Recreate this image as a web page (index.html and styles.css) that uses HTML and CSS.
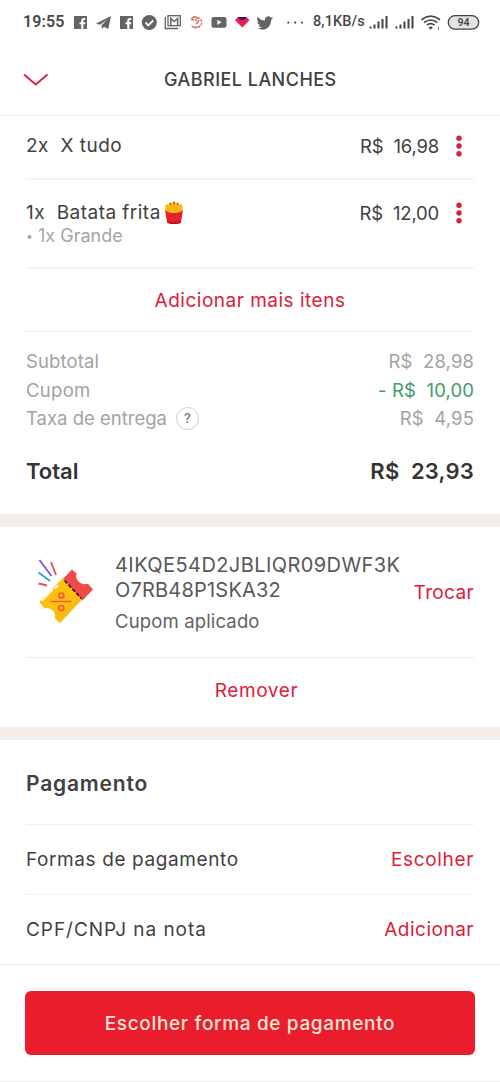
FILE: index.html
```html
<!DOCTYPE html>
<html lang="pt-BR">
<head>
<meta charset="utf-8">
<title>Gabriel Lanches</title>
<link rel="stylesheet" href="styles.css">
</head>
<body>
<div class="screen">
  <div class="status">
    <span class="clock">19:55</span>
    <svg class="status-icons" width="232" height="20" viewBox="72 12 232 20">
      <g fill="#646464">
        <path d="M74 16h13v13h-3.6v-4.800h1.800v-2h-1.800v-1.400q0-1 1-1h1v-1.900h-1.800q-2.400 0-2.400 2.500v1.800h-1.700v2h1.700V29H74z"/>
        <path d="M96 23.500 111 16l-2.700 13-4.300-2.300-1.800 2.300-.8-3.500 5.800-6-7.200 5.200z"/>
        <path d="M120 16h13v13h-3.600v-4.800h1.800v-2h-1.800v-1.400q0-1 1-1h1v-1.900h-1.800q-2.400 0-2.400 2.500v1.800h-1.700v2h1.700V29H120z"/>
        <circle cx="149.300" cy="22.500" r="7.500"/>
        <rect x="211.500" y="17" width="15" height="10.700" rx="2.200"/>
        <path d="M273 16.700q-1 .6-2.100.7a3.600 3.600 0 0 0-6.100 3.200q-4-.2-7.200-3.600-1.500 3 1.200 5-.9 0-1.600-.4.200 2.700 2.900 3.500l-1.500.1q.8 2 3.200 2.400-2.200 1-4 .7 4 2.400 8.200.7 5-2.700 5.200-9 1-.8 1.800-1.900-.9.500-1.900.5 1.200-.6 1.900-1.900z"/>
      </g>
      <path d="m145.500 22.500 2.800 2.800 5-5" fill="none" stroke="#fff" stroke-width="1.900"/>
      <path d="M217.300 19.700v5.200l4.400-2.600z" fill="#fff"/>
      <g fill="none" stroke="#646464">
        <path d="M165.300 17v11.500h13" stroke-width="1.300"/>
        <rect x="168" y="15.700" width="12.300" height="10" stroke-width="1.300"/>
        <path d="M170.800 25v-6.500l3.400 3 3.400-3V25" stroke-width="1.500"/>
      </g>
      <g fill="none" stroke="#d96860" stroke-width="1.400" stroke-dasharray="2.500 1">
        <path d="M191 19q5-4 9 0t-1 8q-5 2-8-2"/>
        <path d="M191.500 20.500q3-2 5 0t-1 4M193 16.500l5 2M194 27.500l5-1M199 20l-2 4"/>
      </g>
      <path d="m235 20.300 3-3.300h8.500l3 3.300-7.200 7.200z" fill="#e91e55"/>
      <path d="m238 17h8.500l-1.500 2.300-2.700 1-2.900-1z" fill="#34145f"/>
      <g fill="#444"><circle cx="288.300" cy="22.600" r="1.050"/><circle cx="295.200" cy="22.600" r="1.050"/><circle cx="302" cy="22.600" r="1.050"/></g>
    </svg>
    <span class="speed">8,1KB/s</span>
    <svg class="signals" width="112" height="20" viewBox="368 12 112 20">
      <g stroke="#444" stroke-width="2">
        <path d="M370.500 28.500v-2M374.500 28.500v-4M378.500 28.500v-7M382.500 28.500v-9.500M386.500 28.500v-12.500"/>
        <path d="M396.500 28.500v-2M400.500 28.500v-4M404.500 28.500v-7M408.500 28.500v-9.500M412.500 28.500v-12.500"/>
      </g>
      <g fill="none" stroke="#444" stroke-width="1.700">
        <path d="M421.500 19.700q9.200-7 18.400 0M424.200 22.500q6.500-5 13 0M426.800 25.200q3.900-3 7.800 0"/>
      </g>
      <path d="m428.500 27.200q2.200-1.400 4.400 0l-2.200 2.500z" fill="#444"/>
      <path d="M438.500 26.500v3.500" stroke="#888" stroke-width="1"/>
      <rect x="448.300" y="15.700" width="30.400" height="13.500" rx="6.700" fill="#e3e3e3" stroke="#444" stroke-width="1.300"/>
      <text class="battery" x="463.400" y="26.400" text-anchor="middle">94</text>
    </svg>
  </div>

  <header class="header">
    <svg class="chevron" width="26" height="14" viewBox="0 0 26 14"><path d="M1 1.500 12.700 11.500 24.500 1.500" fill="none" stroke="#d9203f" stroke-width="1.800"/></svg>
    <h1 class="title">GABRIEL LANCHES</h1>
  </header>

  <main class="content">
    <section class="block order">
      <div class="item item-first">
        <div class="name">2x&nbsp; X tudo</div>
        <div class="price">R$&nbsp; 16,98</div>
        <svg class="dots" width="6" height="22" viewBox="0 0 6 22" fill="#d9203a"><circle cx="3" cy="3.300" r="2.700"/><circle cx="3" cy="11" r="2.700"/><circle cx="3" cy="18.700" r="2.700"/></svg>
      </div>
      <div class="item item-second">
        <div class="desc">
          <div class="name">1x&nbsp; Batata frita<svg class="fries" width="20" height="24" viewBox="0 0 20 24">
            <path d="M1 5 3 3l2 1 1-3 2 1 2-2 2 2 2-1 1 3 3-1 1 4-2 6H2z" fill="#fcc419"/>
            <path d="M4 4v6M7 2v8M10 2v9M13 3v7M16 4v6" stroke="#e99b0c" stroke-width=".9"/>
            <path d="M6 2v2M10 1v2M14 2v2" stroke="#b9441c" stroke-width="1.300"/>
            <path d="M1 9q3 3 9 3t9-3l-2 12q-1 2-7 2t-7-2z" fill="#e5222b"/>
            <path d="M3 20q7 3 14 0l-.5 2q-6 2-13 0z" fill="#b9121c"/>
          </svg></div>
          <div class="extra"><span class="bullet">•</span>1x Grande</div>
        </div>
        <div class="price">R$&nbsp; 12,00</div>
        <svg class="dots" width="6" height="22" viewBox="0 0 6 22" fill="#d9203a"><circle cx="3" cy="3.300" r="2.700"/><circle cx="3" cy="11" r="2.700"/><circle cx="3" cy="18.700" r="2.700"/></svg>
      </div>
      <a class="link add">Adicionar mais itens</a>
      <div class="summary">
        <div class="sum"><span class="s-sub">Subtotal</span><span class="amount">R$&nbsp; 28,98</span></div>
        <div class="sum"><span class="s-cup">Cupom</span><span class="amount green">- R$&nbsp; 10,00</span></div>
        <div class="sum"><span class="s-tax">Taxa de entrega</span><span class="help">?</span><span class="amount">R$&nbsp; 4,95</span></div>
        <div class="total"><span class="t-label">Total</span><span class="t-value">R$&nbsp; 23,93</span></div>
      </div>
    </section>

    <section class="block coupon">
      <div class="coupon-row">
        <svg class="ticket" width="62" height="70" viewBox="34 556 62 70">
          <path d="m63.500 577.500 18 22L60 623l-5-4.500q1-6-3-8.500-4-3-7.500-1.500L39.300 602z" fill="#fdc010"/>
          <path d="m60 623-5-4.500q.6-3-.2-5l28-16.500 1 1.500z" fill="#f5a80e" opacity=".35"/>
          <path d="m63.500 578.500 8.500-9 4.500 4q-1.500 5 2.500 8.500 4 3.300 9 1.800l5 5.700-10.500 11z" fill="#ef4a48"/>
          <path d="m64.500 580.500 17 18" stroke="#4a182c" stroke-width="1.800" stroke-dasharray="4 1.700"/>
          <path d="m42.500 600 10-10.500M55.500 588l2.200-2.300" stroke="#fff8d8" stroke-width="2" stroke-linecap="round"/>
          <path d="M51 601.500h20.500" stroke="#ef5b36" stroke-width="1.500"/>
          <g fill="none" stroke="#ef5b36" stroke-width="1.700"><circle cx="61.300" cy="595.500" r="2.500"/><circle cx="61.300" cy="608" r="2.500"/></g>
          <path d="m39.500 560 12 16" stroke="#7a5bd0" stroke-width="1.900"/>
          <path d="m51 562 5 13M38.500 583.500l8.500 2" stroke="#e94e5c" stroke-width="1.900"/>
          <path d="m38.500 572.500 11.500 8.500" stroke="#35a8c0" stroke-width="1.900"/>
        </svg>
        <div class="coupon-text">
          <div class="code code-a">4IKQE54D2JBLIQR09DWF3K</div>
          <div class="code code-b">O7RB48P1SKA32</div>
          <div class="applied">Cupom aplicado</div>
        </div>
        <a class="link swap">Trocar</a>
      </div>
      <a class="link remove">Remover</a>
    </section>

    <section class="block payment">
      <h2 class="heading">Pagamento</h2>
      <div class="option"><span class="o-form">Formas de pagamento</span><a class="link choose">Escolher</a></div>
      <div class="option"><span class="o-cpf">CPF/CNPJ na nota</span><a class="link insert">Adicionar</a></div>
    </section>
  </main>

  <footer class="footer">
    <button class="cta">Escolher forma de pagamento</button>
  </footer>
</div>
</body>
</html>
```
FILE: styles.css
```css
* { box-sizing: border-box; }
body { margin: 0; background: #fff; font-family: Inter, "Liberation Sans", sans-serif; color: #414141; }
.screen { width: 500px; height: 1082px; overflow: hidden; display: flex; flex-direction: column; white-space: nowrap; }
svg { display: block; flex: none; }

.status { flex: none; height: 44px; display: flex; align-items: center; padding-left: 23px; font-family: Roboto, sans-serif; font-weight: 600; color: #484848; }
.clock { width: 49px; font-size: 16px; letter-spacing: .1px; line-height: 46px; }
.speed { margin-left: 9px; width: 55px; font-size: 14.500px; font-weight: 500; letter-spacing: .1px; line-height: 46px; }
.battery { font: 600 10.500px Roboto, sans-serif; fill: #484848; }

.header { flex: none; height: 72px; display: flex; align-items: center; border-bottom: 1px solid #efefef; padding-left: 23px; }
.title { margin: 0; padding-left: 115px; font-size: 18px; font-weight: 500; letter-spacing: .47px; }

.content { flex: 1; min-height: 0; overflow: hidden; }
.block { padding: 0 26px; border-bottom: 13px solid #f4eeea; }
.item { display: flex; align-items: flex-start; border-bottom: 2px solid #f4f4f4; font-size: 19px; line-height: 24px; }
.item-first { height: 64px; padding-top: 18px; }
.item-second { height: 89px; padding-top: 21px; }
.name { display: flex; align-items: center; letter-spacing: .47px; }
.fries { margin: 0 0 0 3px; }
.extra { display: flex; font-size: 18px; line-height: 22px; color: #a6a6a6; }
.bullet { width: 12px; font-size: 12px; }
.price { margin-left: auto; font-size: 18.500px; letter-spacing: -.2px; }
.dots { margin: 1px 12px 0 17px; }
.link { color: #dc2039; font-size: 19px; letter-spacing: .5px; }
.add { display: block; height: 63px; line-height: 63px; text-align: center; border-bottom: 1px solid #efefef; }
.summary { padding-top: 15px; height: 182px; }
.sum { display: flex; height: 28.500px; align-items: center; color: #a3a3a3; font-size: 18.500px; }
.s-sub { letter-spacing: .12px; }
.s-cup { letter-spacing: .3px; }
.amount { margin-left: auto; letter-spacing: .1px; }
.green { color: #3f9c6b; }
.help { width: 23px; height: 23px; margin-left: 9px; border: 1px solid #cfcfcf; border-radius: 50%; font-size: 13px; line-height: 21px; text-align: center; color: #777; font-weight: 500; }
.total { display: flex; justify-content: space-between; margin-top: 23px; line-height: 30px; font-size: 22px; font-weight: 600; color: #343434; }
.t-value { letter-spacing: .2px; }

.coupon-row { display: flex; height: 131px; border-bottom: 1px solid #ececec; }
.ticket { margin: 29px 0 0 8px; }
.coupon-text { width: 300px; padding: 26px 0 0 19px; color: #585858; }
.code { font-size: 20px; line-height: 25px; }
.code-a { letter-spacing: .42px; }
.code-b { letter-spacing: .2px; }
.applied { font-size: 18.500px; line-height: 24px; margin-top: 6px; color: #626262; letter-spacing: .15px; }
.swap { margin-left: auto; padding-top: 54px; line-height: 24px; letter-spacing: .35px; }
.remove { display: block; height: 69px; padding-left: 13px; line-height: 66px; text-align: center; letter-spacing: .6px; }
.payment { border: 0; }
.heading { margin: 0; height: 85px; line-height: 88px; font-size: 21px; font-weight: 600; letter-spacing: .8px; border-bottom: 1px solid #efefef; }
.option { height: 70px; line-height: 69px; display: flex; justify-content: space-between; font-size: 19px; border-bottom: 1px solid #efefef; }
.o-form { letter-spacing: .6px; }
.o-cpf { letter-spacing: .95px; }
.choose { letter-spacing: .65px; }

.footer { flex: none; height: 118px; padding: 26px 25px 0; border-top: 1px solid #ececec; border-bottom: 1px solid #f2f2f2; }
.cta { display: block; width: 450px; height: 64px; border: 0; border-radius: 6px; background: #ea1d2c; color: #ffe4d4; font: 500 19px/64px Inter, sans-serif; letter-spacing: .65px; padding: 1px 0 0; }
```
